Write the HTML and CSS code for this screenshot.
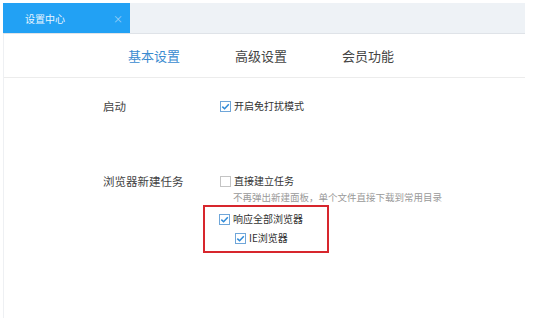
FILE: index.html
```html
<!DOCTYPE html>
<html lang="zh-CN">
<head>
    <meta charset="UTF-8">
    <title>设置中心</title>
    <link rel="stylesheet" href="styles.css">
</head>
<body>
    <div class="window">
        <div class="tabbar">
            <div class="tab">
                <span class="tab-title">设置中心</span>
                <span class="tab-close">×</span>
            </div>
        </div>
        <div class="nav">
            <span class="nav-item active">基本设置</span>
            <span class="nav-item">高级设置</span>
            <span class="nav-item">会员功能</span>
        </div>
        <div class="content">
            <div class="row">
                <div class="label">启动</div>
                <div class="controls">
                    <label class="option">
                        <svg class="box checked" width="11" height="11" viewBox="0 0 11 11"><rect x="0.5" y="0.5" width="10" height="10" fill="#fff" stroke="#6fa6d9"/><path d="M2.3 5.6 L4.6 7.8 L8.8 3.2" fill="none" stroke="#2f8ad8" stroke-width="1.5"/></svg>
                        开启免打扰模式
                    </label>
                </div>
            </div>
            <div class="row second">
                <div class="label">浏览器新建任务</div>
                <div class="controls">
                    <label class="option">
                        <svg class="box" width="11" height="11" viewBox="0 0 11 11"><rect x="0.5" y="0.5" width="10" height="10" fill="#fff" stroke="#c4c4c4"/></svg>
                        直接建立任务
                    </label>
                    <div class="hint">不再弹出新建面板，单个文件直接下载到常用目录</div>
                    <div class="highlight">
                        <label class="option">
                            <svg class="box checked" width="11" height="11" viewBox="0 0 11 11"><rect x="0.5" y="0.5" width="10" height="10" fill="#fff" stroke="#6fa6d9"/><path d="M2.3 5.6 L4.6 7.8 L8.8 3.2" fill="none" stroke="#2f8ad8" stroke-width="1.5"/></svg>
                            响应全部浏览器
                        </label>
                        <label class="option sub">
                            <svg class="box checked" width="11" height="11" viewBox="0 0 11 11"><rect x="0.5" y="0.5" width="10" height="10" fill="#fff" stroke="#6fa6d9"/><path d="M2.3 5.6 L4.6 7.8 L8.8 3.2" fill="none" stroke="#2f8ad8" stroke-width="1.5"/></svg>
                            IE浏览器
                        </label>
                    </div>
                </div>
            </div>
        </div>
    </div>
</body>
</html>
```

FILE: styles.css
```css
body {
    margin: 0;
    background: #fff;
    font-family: "Noto Sans CJK SC", "Noto Sans", sans-serif;
    color: #333;
    font-size: 12px;
}
.window {
    margin: 3px 0 0 3px;
    width: 522px;
    height: 315px;
    border-left: 1px solid #eef0f3;
    box-sizing: border-box;
}
.tabbar {
    height: 30px;
    background: #eef2f6;
    border-bottom: 1px solid #dfe3e8;
    display: flex;
    margin-left: -1px;
}
.tab {
    width: 127px;
    background: #22a1f4;
    color: #e8f5ff;
    display: flex;
    align-items: center;
    justify-content: space-between;
    padding: 0 7px 0 22px;
    box-sizing: border-box;
}
.tab-title {
    font-size: 10px;
}
.tab-close {
    font-size: 10px;
    color: #9fd2f7;
}
.nav {
    height: 44px;
    border-bottom: 1px solid #ececec;
    display: flex;
    align-items: center;
    gap: 55px;
    padding-left: 124px;
    box-sizing: border-box;
}
.nav-item {
    font-size: 13px;
    color: #444;
}
.nav-item.active {
    color: #3a8bd0;
}
.content {
    padding-top: 19px;
}
.row {
    display: flex;
}
.row.second {
    margin-top: 57px;
}
.label {
    width: 116px;
    padding-left: 99px;
    line-height: 18px;
    font-size: 11.5px;
    color: #444;
}
.controls {
    display: flex;
    flex-direction: column;
}
.option {
    display: flex;
    align-items: center;
    gap: 3px;
    line-height: 18px;
    height: 18px;
    font-size: 10px;
    color: #333;
}
.box {
    flex: none;
    margin-left: 1px;
}
.hint {
    padding-left: 14px;
    line-height: 14px;
    font-size: 9.5px;
    color: #999;
}
.highlight {
    margin: 1px 0 0 -16px;
    width: 126px;
    border: 2px solid #d7262d;
    padding: 3px 0 4px 13px;
    box-sizing: border-box;
}
.option.sub {
    margin-left: 16px;
    margin-top: 1px;
}
```
